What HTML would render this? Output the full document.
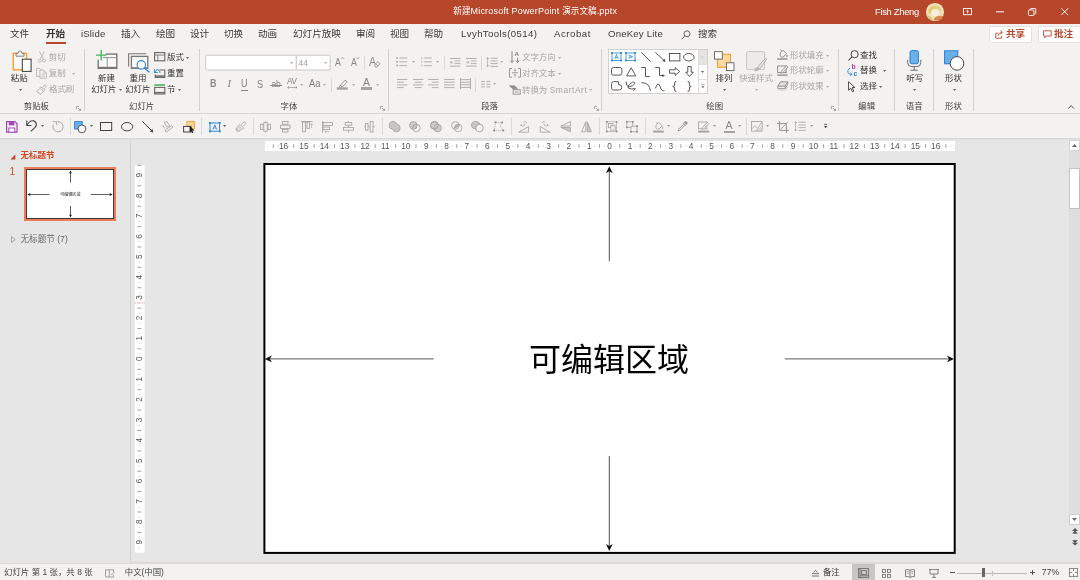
<!DOCTYPE html>
<html lang="zh-CN">
<head>
<meta charset="utf-8">
<title>新建Microsoft PowerPoint 演示文稿.pptx</title>
<style>
*{box-sizing:border-box;margin:0;padding:0}
html,body{width:1080px;height:580px;overflow:hidden;background:#e6e6e6}
body{position:relative;will-change:transform;font-family:"Liberation Sans","Noto Sans CJK SC",sans-serif;font-size:9.6px;color:#444}
.abs,.t{position:absolute;white-space:nowrap}
.t{line-height:12px;height:12px}
svg{position:absolute;overflow:visible}
#titlebar{left:0;top:0;width:1080px;height:24px;background:#b7472a}
#tabs{left:0;top:24px;width:1080px;height:21px;background:#f3f2f1}
#ribbon{left:0;top:45px;width:1080px;height:69px;background:#f3f2f1;border-bottom:1px solid #d8d6d4}
#qat{left:0;top:114px;width:1080px;height:24px;background:#f3f2f1}
#qatline{left:0;top:138px;width:1080px;height:3px;background:linear-gradient(#d4d4d4,#e2e2e2 60%,#e6e6e6)}
#status{left:0;top:563px;width:1080px;height:17px;background:#f3f2f1;border-top:1px solid #dcdad8}
.sep{position:absolute;width:1px;background:#d4d2d0}
.dim{color:#a9a7a5}
.btn{position:absolute;background:#fff;border:1px solid #e4e2e0;border-radius:2px}
</style>
</head>
<body>

<!-- ===== title bar ===== -->
<div id="titlebar" class="abs">
<span class="t" style="left:453.3px;top:4.90px;font-size:8.6px;color:#fff;">新建<span style="font-size:9px;letter-spacing:.2px">Microsoft PowerPoint </span>演示文稿<span style="font-size:9px;letter-spacing:.2px">.pptx</span></span>
<span class="t" style="left:875px;top:5.70px;font-size:9.4px;color:#fff;letter-spacing:-0.3px;">Fish Zheng</span>
<div class="abs" style="left:926.4px;top:3px;width:17.6px;height:17.6px;border-radius:50%;overflow:hidden;background:#efe3bc"><svg style="left:0;top:0" width="17.6" height="17.6" viewBox="0 0 18 18"><path d="M2 9Q3 2.5 9.5 2.6Q15.5 3 15.6 9.5Q13.6 6 10 6.6Q5.5 6 4.4 11.4Q2.4 11 2 9Z" fill="#e6cc78"/><ellipse cx="9.4" cy="10" rx="4" ry="3.8" fill="#f8f0dc"/><path d="M10 14Q14 12.4 17.6 13.4V18H8Q8 15.4 10 14Z" fill="#d98a4a"/><path d="M.4 12Q3.6 12.6 6.4 15.4Q7.4 17 6.4 18H.4Z" fill="#dcc48a"/></svg></div>
<svg style="left:962.8px;top:8.4px" width="9" height="7.4" viewBox="0 0 9 7.4" fill="none" stroke="#fff" stroke-width=".9"><rect x=".5" y=".5" width="8" height="6.2"/><path d="M4.5 5.2V2.4M3.2 3.5 4.5 2.2 5.8 3.5" stroke-width=".8"/></svg>
<svg style="left:996px;top:11px" width="9" height="2" viewBox="0 0 9 2"><path d="M0 .8H8" stroke="#fff" stroke-width="1"/></svg>
<svg style="left:1028.4px;top:7.6px" width="8.6" height="8.6" viewBox="0 0 10 10" fill="none" stroke="#fff" stroke-width="1"><rect x=".5" y="2.3" width="6.4" height="6.4" rx="1"/><path d="M2.6 2.2V1.4Q2.6.6 3.4.6H8.2Q9 .6 9 1.4V6.2Q9 7 8.2 7H7.2"/></svg>
<svg style="left:1061px;top:8.4px" width="7.4" height="7.4" viewBox="0 0 7.4 7.4"><path d="M.3.3 7.1 7.1M7.1 .3.3 7.1" stroke="#fff" stroke-width=".95"/></svg>
</div>
<!-- ===== tab row ===== -->
<div id="tabs" class="abs">
<span class="t" style="left:10px;top:4.10px;font-size:9.6px;color:#3b3b3b;">文件</span>
<span class="t" style="left:46px;top:4.10px;font-size:9.6px;color:#333;font-weight:700;">开始</span>
<span class="t" style="left:81px;top:4.10px;font-size:9.6px;color:#3b3b3b;letter-spacing:0.15px;">iSlide</span>
<span class="t" style="left:121px;top:4.10px;font-size:9.6px;color:#3b3b3b;">插入</span>
<span class="t" style="left:156px;top:4.10px;font-size:9.6px;color:#3b3b3b;">绘图</span>
<span class="t" style="left:190px;top:4.10px;font-size:9.6px;color:#3b3b3b;">设计</span>
<span class="t" style="left:224px;top:4.10px;font-size:9.6px;color:#3b3b3b;">切换</span>
<span class="t" style="left:258px;top:4.10px;font-size:9.6px;color:#3b3b3b;">动画</span>
<span class="t" style="left:293px;top:4.10px;font-size:9.6px;color:#3b3b3b;">幻灯片放映</span>
<span class="t" style="left:356px;top:4.10px;font-size:9.6px;color:#3b3b3b;">审阅</span>
<span class="t" style="left:390px;top:4.10px;font-size:9.6px;color:#3b3b3b;">视图</span>
<span class="t" style="left:424px;top:4.10px;font-size:9.6px;color:#3b3b3b;">帮助</span>
<span class="t" style="left:461px;top:4.10px;font-size:9.6px;color:#3b3b3b;letter-spacing:0.4px;">LvyhTools(0514)</span>
<span class="t" style="left:554px;top:4.10px;font-size:9.6px;color:#3b3b3b;letter-spacing:0.55px;">Acrobat</span>
<span class="t" style="left:608px;top:4.10px;font-size:9.6px;color:#3b3b3b;letter-spacing:0.2px;">OneKey Lite</span>
<div class="abs" style="left:46px;top:18px;width:20px;height:2px;background:#b7472a"></div>
<svg style="left:681px;top:6px" width="10" height="10" viewBox="0 0 10 10" fill="none" stroke="#555" stroke-width=".9"><circle cx="6" cy="3.8" r="3"/><path d="M3.8 6 .8 9.2"/></svg>
<span class="t" style="left:698px;top:4.10px;font-size:9.6px;color:#3b3b3b;">搜索</span>
<div class="btn" style="left:989px;top:2px;width:43px;height:17px"></div>
<svg style="left:995px;top:6px" width="9" height="9" viewBox="0 0 9 9" fill="none" stroke="#b7472a" stroke-width=".9"><path d="M3 3.2H.8V8.2H6.6V6"/><path d="M3 6Q3.4 2.6 7 2.4M5.4.6 7.4 2.4 5.4 4.2"/></svg>
<span class="t" style="left:1006px;top:4.10px;font-size:9.6px;color:#b7472a;font-weight:700;">共享</span>
<div class="btn" style="left:1038px;top:2px;width:46px;height:17px"></div>
<svg style="left:1043px;top:6px" width="9" height="9" viewBox="0 0 9 9" fill="none" stroke="#b7472a" stroke-width=".9"><path d="M.6.8H8.2V6H3.4L1.8 7.8V6H.6Z"/></svg>
<span class="t" style="left:1054px;top:4.10px;font-size:9.6px;color:#b7472a;font-weight:700;">批注</span>
</div>
<!-- ===== ribbon ===== -->
<div id="ribbon" class="abs"></div>
<div class="abs" style="left:0;top:0">
<svg style="left:11.5px;top:50.3px" width="20" height="22.5" viewBox="0 0 20 22.5" fill="none" stroke="#605e5c" stroke-width="0.9" ><rect x="1.3" y="3.4" width="13.2" height="16.4" fill="#fbfaf9" stroke="#f2a33a" stroke-width="1.5"/><path d="M4 6.2V3.4H6Q6.2 .9 8 .9Q9.8 .9 10 3.4H12V6.2Z" stroke="#7a7876" stroke-width=".9" fill="#f3f2f1"/><rect x="10.3" y="9.2" width="8.8" height="12.2" fill="#fff" stroke="#4a4846" stroke-width="1.1"/></svg>
<span class="t" style="left:10.75px;top:72.35px;font-size:8.45px;color:#333;">粘贴</span>
<svg style="left:18.90px;top:88.80px" width="3.2" height="2" viewBox="0 0 3.2 2"><path d="M0 0H3.2L1.6 2Z" fill="#666"/></svg>
<svg style="left:38px;top:51.4px" width="8" height="11.6" viewBox="0 0 8 11.6" fill="none" stroke="#b3b0ad" stroke-width="0.8" ><path d="M1.4.4 5.2 8M6.2.4 2.4 8"/><circle cx="1.7" cy="9.6" r="1.4"/><circle cx="5.9" cy="9.6" r="1.4"/></svg>
<span class="t" style="left:48.75px;top:51.10px;font-size:8.45px;color:#a9a7a5;">剪切</span>
<svg style="left:36.2px;top:67.6px" width="11" height="10.8" viewBox="0 0 11 10.8" fill="none" stroke="#b3b0ad" stroke-width="0.8" ><path d="M3.8 8.4H.5V.5H3.8L5 1.8"/><path d="M3.9 2H7.6L10.4 4.8V10.2H3.9Z"/><path d="M7.4 2.2V5H10.2M5.4 6.4H8.8M5.4 8.2H8.8" stroke-width=".6"/></svg>
<span class="t" style="left:48.75px;top:66.85px;font-size:8.45px;color:#a9a7a5;">复制</span>
<svg style="left:71.60px;top:72.60px" width="3.2" height="2" viewBox="0 0 3.2 2"><path d="M0 0H3.2L1.6 2Z" fill="#b3b0ad"/></svg>
<svg style="left:36.4px;top:84px" width="11" height="11" viewBox="0 0 11 11" fill="none" stroke="#b3b0ad" stroke-width="0.8" ><path d="M6.6 3.6 9 .6 10.6 1.8 8.4 5"/><path d="M4.6 2.8 9 6 8 7.4 3.6 4.2Z"/><path d="M3.6 4.4.6 7.6 2.2 8 2.4 9.2 3.8 9.2 4.2 10.4 7.6 7.2"/></svg>
<span class="t" style="left:49px;top:83.10px;font-size:8.45px;color:#a9a7a5;">格式刷</span>
<span class="t" style="left:23.75px;top:100.35px;font-size:8.45px;color:#444;">剪贴板</span>
<svg style="left:76px;top:106px" width="5" height="5" viewBox="0 0 5 5" fill="none" stroke="#8a8886" stroke-width="0.7" ><path d="M.4 3V.4H3M2 2 4.4 4.4M4.6 2.6V4.6H2.6"/></svg>
<div class="sep" style="left:84px;top:48.5px;height:62.0px;background:#d4d2d0"></div>
<svg style="left:95.5px;top:49.5px" width="22" height="19.5" viewBox="0 0 22 19.5" fill="none" stroke="#605e5c" stroke-width="0.9" ><rect x="2.2" y="4.1" width="18.6" height="14.2" fill="#faf9f8" stroke="#7a7876" stroke-width="1.4"/><path d="M2.2 17.6H20.8" stroke="#7a7876" stroke-width="1.6"/><path d="M11.2 7.6V16.8M2.2 7.6H20.8" stroke="#8a8886" stroke-width=".9"/><rect x="0" y="0" width="9.6" height="6.9" fill="#f3f2f1" stroke="none"/><rect x="0" y="0" width="6.9" height="9.6" fill="#f3f2f1" stroke="none"/><path d="M5.2 0V10.4M0 5.2H10.4" stroke="#3cb55f" stroke-width="1.3"/></svg>
<span class="t" style="left:98px;top:72.35px;font-size:8.45px;color:#333;">新建</span>
<span class="t" style="left:91.2px;top:82.85px;font-size:8.45px;color:#333;">幻灯片</span>
<svg style="left:118.60px;top:88.80px" width="3.2" height="2" viewBox="0 0 3.2 2"><path d="M0 0H3.2L1.6 2Z" fill="#666"/></svg>
<svg style="left:127.5px;top:52.5px" width="22" height="19.5" viewBox="0 0 22 19.5" fill="none" stroke="#605e5c" stroke-width="0.9" ><path d="M.6 13.6V.7H18.2" stroke="#7a7876" stroke-width="1.1"/><rect x="3.4" y="3.4" width="16.4" height="12" fill="#faf9f8" stroke="#7a7876" stroke-width="1.3"/><path d="M3.4 14.8H19.8" stroke="#8a8886" stroke-width="1.4"/><circle cx="13.3" cy="11.8" r="4.2" fill="#fbfbfb" stroke="#2b88d8" stroke-width="1.1"/><path d="M16.3 15 21.4 19.2" stroke="#2b88d8" stroke-width="1.2"/></svg>
<span class="t" style="left:129.5px;top:72.35px;font-size:8.45px;color:#333;">重用</span>
<span class="t" style="left:125.2px;top:82.85px;font-size:8.45px;color:#333;">幻灯片</span>
<svg style="left:154px;top:52px" width="11.5" height="9.5" viewBox="0 0 11.5 9.5" fill="none" stroke="#666" stroke-width="0.9" ><rect x=".6" y=".6" width="10.2" height="8.2" stroke-width="1.1"/><path d="M.6 3H10.8M3.8 3V8.8" stroke-width=".8"/></svg>
<span class="t" style="left:167px;top:50.60px;font-size:8.45px;color:#333;">版式</span>
<svg style="left:186.40px;top:56.60px" width="3.2" height="2" viewBox="0 0 3.2 2"><path d="M0 0H3.2L1.6 2Z" fill="#666"/></svg>
<svg style="left:154px;top:67.5px" width="11.5" height="10" viewBox="0 0 11.5 10" fill="none" stroke="#605e5c" stroke-width="0.9" ><path d="M5.4 2H10.8V9.4H1.2V6.4" stroke="#666" stroke-width="1.1"/><path d="M1.2 8H10.8" stroke="#666" stroke-width="1.4"/><path d="M.4 1.2V4.6H3.8M.8 4.2Q2.6 0 5.4 2.8Q6 3.6 6 5" stroke="#2b88d8" stroke-width="1"/></svg>
<span class="t" style="left:167px;top:66.85px;font-size:8.45px;color:#333;">重置</span>
<svg style="left:154px;top:84px" width="11.5" height="10.5" viewBox="0 0 11.5 10.5" fill="none" stroke="#605e5c" stroke-width="0.9" ><path d="M.4 1H11" stroke="#33a852" stroke-width="1.4"/><rect x=".6" y="3.4" width="10.2" height="6.6" stroke="#666" stroke-width="1.1"/><path d="M.6 8.6H10.8" stroke="#666" stroke-width="1.4"/></svg>
<span class="t" style="left:167px;top:83.10px;font-size:8.45px;color:#333;">节</span>
<svg style="left:178.00px;top:89.00px" width="3.2" height="2" viewBox="0 0 3.2 2"><path d="M0 0H3.2L1.6 2Z" fill="#666"/></svg>
<span class="t" style="left:129px;top:100.35px;font-size:8.45px;color:#444;">幻灯片</span>
<div class="sep" style="left:199px;top:48.5px;height:62.0px;background:#d4d2d0"></div>
<svg style="left:205px;top:54px" width="126" height="17" viewBox="0 0 126 17" fill="none" stroke="#605e5c" stroke-width="1" ><rect x=".7" y="1.2" width="90.6" height="14.8" rx=".8" fill="#fff" stroke="#cbc9c7"/><rect x="91.3" y="1.2" width="33.8" height="14.8" rx=".8" fill="#fff" stroke="#cbc9c7"/></svg>
<svg style="left:290.40px;top:62.00px" width="3.2" height="2" viewBox="0 0 3.2 2"><path d="M0 0H3.2L1.6 2Z" fill="#b3b1af"/></svg>
<span class="t" style="left:298.6px;top:56.60px;font-size:8.45px;color:#a19f9d;">44</span>
<svg style="left:324.20px;top:62.00px" width="3.2" height="2" viewBox="0 0 3.2 2"><path d="M0 0H3.2L1.6 2Z" fill="#b3b1af"/></svg>
<span class="t" style="left:335px;top:56.30px;font-size:10.7px;color:#8a8886;transform:scaleX(.82);transform-origin:0 50%;">A</span>
<svg style="left:340.6px;top:57.1px" width="3.4" height="2.2" viewBox="0 0 3.4 2.2" fill="none" stroke="#8a8886" stroke-width="0.7" ><path d="M.2 2 1.7.3 3.2 2"/></svg>
<span class="t" style="left:350.8px;top:56.30px;font-size:10.7px;color:#8a8886;transform:scaleX(.82);transform-origin:0 50%;">A</span>
<svg style="left:356.3px;top:57.3px" width="3.4" height="2.2" viewBox="0 0 3.4 2.2" fill="none" stroke="#8a8886" stroke-width="0.7" ><path d="M.2 .3 1.7 2 3.2 .3"/></svg>
<div class="sep" style="left:364px;top:55.5px;height:14.0px;background:#dad8d6"></div>
<span class="t" style="left:369px;top:55.50px;font-size:13px;color:#8a8886;transform:scaleX(.82);transform-origin:0 50%;">A</span>
<svg style="left:373.8px;top:60.6px" width="6.6" height="6.8" viewBox="0 0 6.6 6.8" fill="none" stroke="#8a8886" stroke-width="0.8" ><path d="M.6 4 3.8.6 6 2.8 2.8 6.2H1.6Z" fill="#f3f2f1"/><path d="M1.8 2.8 4 5"/></svg>
<span class="t" style="left:210.4px;top:77.70px;font-size:10.3px;color:#8f8d8b;font-weight:700;transform:scaleX(.87);transform-origin:0 50%;">B</span>
<span class="t" style="left:227.4px;top:77.70px;font-size:10.6px;color:#838180;font-style:italic;font-family:'Liberation Serif',serif;">I</span>
<span class="t" style="left:241.3px;top:77.70px;font-size:10.3px;color:#838180;transform:scaleX(.87);transform-origin:0 50%;">U</span>
<div class="abs" style="left:241.2px;top:89.6px;width:6.8px;height:.9px;background:#8a8886"></div>
<span class="t" style="left:257px;top:77.90px;font-size:10.5px;color:#838180;transform:scaleX(.87);transform-origin:0 50%;">S</span>
<span class="t" style="left:271.4px;top:77.80px;font-size:8.6px;color:#838180;letter-spacing:-0.2px;">ab</span>
<div class="abs" style="left:270.4px;top:85px;width:11.8px;height:.8px;background:#8a8886"></div>
<span class="t" style="left:287px;top:76.30px;font-size:8.2px;color:#838180;letter-spacing:-0.3px;">AV</span>
<svg style="left:287.2px;top:85.6px" width="10.6" height="3" viewBox="0 0 10.6 3" fill="none" stroke="#838180" stroke-width="0.6" ><path d="M.6 1.5H10M2 .3.6 1.5 2 2.7M8.6.3 10 1.5 8.6 2.7"/></svg>
<svg style="left:300.20px;top:83.60px" width="3.2" height="2" viewBox="0 0 3.2 2"><path d="M0 0H3.2L1.6 2Z" fill="#b3b1af"/></svg>
<span class="t" style="left:308.8px;top:78.10px;font-size:10.1px;color:#838180;transform:scaleX(.93);transform-origin:0 50%;">Aa</span>
<svg style="left:323.00px;top:83.60px" width="3.2" height="2" viewBox="0 0 3.2 2"><path d="M0 0H3.2L1.6 2Z" fill="#b3b1af"/></svg>
<div class="sep" style="left:331px;top:78px;height:13.5px;background:#dad8d6"></div>
<svg style="left:337px;top:79px" width="11.5" height="10.5" viewBox="0 0 11.5 10.5" fill="none" stroke="#838180" stroke-width="0.8" ><path d="M3.4 6.2 8.2 1 10.2 3 5.2 8"/><path d="M3.4 6.2 5.2 8 3.4 8.6 2.4 8.4 2.6 7.2Z"/><path d="M-.2 9.5H10.8" stroke-width="2.4" stroke="#a6a4a2"/></svg>
<svg style="left:352.20px;top:83.60px" width="3.2" height="2" viewBox="0 0 3.2 2"><path d="M0 0H3.2L1.6 2Z" fill="#b3b1af"/></svg>
<span class="t" style="left:362.6px;top:76.20px;font-size:11px;color:#838180;transform:scaleX(.94);transform-origin:0 50%;">A</span>
<div class="abs" style="left:361px;top:87.3px;width:10.8px;height:2.4px;background:#a6a4a2"></div>
<svg style="left:376.40px;top:83.60px" width="3.2" height="2" viewBox="0 0 3.2 2"><path d="M0 0H3.2L1.6 2Z" fill="#b3b1af"/></svg>
<span class="t" style="left:280.5px;top:100.35px;font-size:8.45px;color:#444;">字体</span>
<svg style="left:380px;top:106px" width="5" height="5" viewBox="0 0 5 5" fill="none" stroke="#8a8886" stroke-width="0.7" ><path d="M.4 3V.4H3M2 2 4.4 4.4M4.6 2.6V4.6H2.6"/></svg>
<div class="sep" style="left:388px;top:48.5px;height:62.0px;background:#d4d2d0"></div>
<svg style="left:396.2px;top:57px" width="11.5" height="9.6" viewBox="0 0 11.5 9.6" fill="none" stroke="#a19f9d" stroke-width="0.8" ><path d="M3.4 1H11.2M3.4 4.8H11.2M3.4 8.6H11.2"/><path d="M.2 1H1.8M.2 4.8H1.8M.2 8.6H1.8" stroke-width="1.5"/></svg>
<svg style="left:412.20px;top:61.00px" width="3.2" height="2" viewBox="0 0 3.2 2"><path d="M0 0H3.2L1.6 2Z" fill="#b3b1af"/></svg>
<svg style="left:421.2px;top:57px" width="11" height="9.6" viewBox="0 0 11 9.6" fill="none" stroke="#a19f9d" stroke-width="0.8" ><path d="M3.2 1H10.8M3.2 4.8H10.8M3.2 8.6H10.8"/><path d="M.8 0V2.2M.8 3.8V6M.8 7.4V9.6" stroke-width=".7"/></svg>
<svg style="left:436.40px;top:61.00px" width="3.2" height="2" viewBox="0 0 3.2 2"><path d="M0 0H3.2L1.6 2Z" fill="#b3b1af"/></svg>
<div class="sep" style="left:444px;top:55.5px;height:14.0px;background:#dad8d6"></div>
<svg style="left:450px;top:57.6px" width="10.5" height="8.6" viewBox="0 0 10.5 8.6" fill="none" stroke="#a19f9d" stroke-width="0.8" ><path d="M0 .5H10.4M4.6 3H10.4M4.6 5.6H10.4M0 8.1H10.4"/><path d="M3.2 4.3H.4M1.6 3 .3 4.3 1.6 5.6" stroke-width=".7"/></svg>
<svg style="left:466.2px;top:57.6px" width="10.8" height="8.6" viewBox="0 0 10.8 8.6" fill="none" stroke="#a19f9d" stroke-width="0.8" ><path d="M0 .5H10.6M4.8 3H10.6M4.8 5.6H10.6M0 8.1H10.6"/><path d="M.2 4.3H3M1.8 3 3.1 4.3 1.8 5.6" stroke-width=".7"/></svg>
<div class="sep" style="left:481px;top:55.5px;height:14.0px;background:#dad8d6"></div>
<svg style="left:486.2px;top:56.6px" width="12" height="10.4" viewBox="0 0 12 10.4" fill="none" stroke="#a19f9d" stroke-width="0.8" ><path d="M4.6 1.2H11.8M4.6 4H11.8M4.6 6.6H11.8M4.6 9.4H11.8"/><path d="M1.6 .6V9.8M.3 2 1.6.5 2.9 2M.3 8.4 1.6 9.9 2.9 8.4" stroke-width=".7"/></svg>
<svg style="left:500.20px;top:61.00px" width="3.2" height="2" viewBox="0 0 3.2 2"><path d="M0 0H3.2L1.6 2Z" fill="#b3b1af"/></svg>
<svg style="left:397px;top:79.2px" width="10.6" height="9.2" viewBox="0 0 10.6 9.2" fill="none" stroke="#a19f9d" stroke-width="0.8" ><path d="M0 .5H10.4M0 3.2H6.8M0 5.9H10.4M0 8.6H6.8"/></svg>
<svg style="left:412.5px;top:79.2px" width="10.6" height="9.2" viewBox="0 0 10.6 9.2" fill="none" stroke="#a19f9d" stroke-width="0.8" ><path d="M0 .5H10.4M1.8 3.2H8.6M0 5.9H10.4M1.8 8.6H8.6"/></svg>
<svg style="left:428px;top:79.2px" width="10.8" height="9.2" viewBox="0 0 10.8 9.2" fill="none" stroke="#a19f9d" stroke-width="0.8" ><path d="M0 .5H10.6M3.8 3.2H10.6M0 5.9H10.6M3.8 8.6H10.6"/></svg>
<svg style="left:443.8px;top:79.2px" width="10.8" height="9.2" viewBox="0 0 10.8 9.2" fill="none" stroke="#a19f9d" stroke-width="0.8" ><path d="M0 .5H10.6M0 3.2H10.6M0 5.9H10.6M0 8.6H10.6"/></svg>
<svg style="left:459.5px;top:78.4px" width="11" height="11" viewBox="0 0 11 11" fill="none" stroke="#a19f9d" stroke-width="0.8" ><path d="M.5 0V11M10.5 0V11" stroke-width=".8"/><path d="M.5 1.6H10.5M.5 4.2H10.5M.5 6.8H10.5M.5 9.4H10.5"/></svg>
<div class="sep" style="left:475px;top:78px;height:13.5px;background:#dad8d6"></div>
<svg style="left:480.8px;top:80.6px" width="9.4" height="6.6" viewBox="0 0 9.4 6.6" fill="none" stroke="#a19f9d" stroke-width="0.8" ><path d="M0 .5H4M5.4 .5H9.4M0 3.2H4M5.4 3.2H9.4M0 5.9H4M5.4 5.9H9.4"/></svg>
<svg style="left:493.40px;top:83.40px" width="3.2" height="2" viewBox="0 0 3.2 2"><path d="M0 0H3.2L1.6 2Z" fill="#b3b1af"/></svg>
<svg style="left:509.6px;top:51px" width="10" height="12.6" viewBox="0 0 10 12.6" fill="none" stroke="#807e7c" stroke-width="0.9" ><path d="M2 .4V11.4M.3 9.6 2 11.6 3.7 9.6" stroke-width=".9"/><path d="M7.6 6.6V11.4M6.1 9.6 7.6 11.6 9.1 9.6" stroke-width=".9"/></svg>
<span class="t" style="left:514.4px;top:48.20px;font-size:6.2px;color:#807e7c;font-weight:700;">A</span>
<span class="t" style="left:522px;top:51.10px;font-size:8.45px;color:#a9a7a5;">文字方向</span>
<svg style="left:557.60px;top:57.00px" width="3.2" height="2" viewBox="0 0 3.2 2"><path d="M0 0H3.2L1.6 2Z" fill="#b3b1af"/></svg>
<svg style="left:508.6px;top:68.2px" width="12" height="9.6" viewBox="0 0 12 9.6" fill="none" stroke="#8f8d8b" stroke-width="0.8" ><path d="M3 .5H.5V9.1H3M9 .5H11.5V9.1H9" stroke-width=".9"/><path d="M6 .2V3.2M4.8 2.2 6 3.4 7.2 2.2M6 9.4V6.4M4.8 7.4 6 6.2 7.2 7.4" stroke-width=".7"/><path d="M3 4.8H9" stroke-width=".9"/></svg>
<span class="t" style="left:522px;top:66.60px;font-size:8.45px;color:#a9a7a5;">对齐文本</span>
<svg style="left:557.60px;top:72.60px" width="3.2" height="2" viewBox="0 0 3.2 2"><path d="M0 0H3.2L1.6 2Z" fill="#b3b1af"/></svg>
<svg style="left:509px;top:84.6px" width="11.8" height="9.8" viewBox="0 0 11.8 9.8" fill="none" stroke="#a19f9d" stroke-width="0.8" ><path d="M.4 .8H5.4L8.4 3.4H5.6V5.2L.4 .8Z" fill="#908e8c" stroke="#908e8c" stroke-width=".7"/><rect x="4.2" y="4.6" width="7" height="4.6" fill="#f3f2f1" stroke="#908e8c" stroke-width=".9"/><path d="M5.6 6.2H9.8M5.6 7.6H9.8" stroke-width=".6"/></svg>
<span class="t" style="left:522px;top:83.60px;font-size:8.45px;color:#a9a7a5;">转换为 <span style="letter-spacing:.55px">SmartArt</span></span>
<svg style="left:589.20px;top:89.40px" width="3.2" height="2" viewBox="0 0 3.2 2"><path d="M0 0H3.2L1.6 2Z" fill="#b3b1af"/></svg>
<span class="t" style="left:481.2px;top:100.35px;font-size:8.45px;color:#444;">段落</span>
<svg style="left:594px;top:106px" width="5" height="5" viewBox="0 0 5 5" fill="none" stroke="#8a8886" stroke-width="0.7" ><path d="M.4 3V.4H3M2 2 4.4 4.4M4.6 2.6V4.6H2.6"/></svg>
<div class="sep" style="left:601px;top:48.5px;height:62.0px;background:#d4d2d0"></div>
<div class="abs" style="left:608.4px;top:49.3px;width:99.4px;height:44.6px;background:#fff;border:1px solid #d2d0ce"></div>
<div class="abs" style="left:698px;top:50.2px;width:9px;height:14.2px;background:#e6e4e2"></div>
<div class="abs" style="left:698px;top:50px;width:1px;height:43px;background:#e1dfdd"></div>
<div class="abs" style="left:698px;top:64.4px;width:9px;height:1px;background:#e1dfdd"></div>
<div class="abs" style="left:698px;top:78.6px;width:9px;height:1px;background:#e1dfdd"></div>
<svg style="left:701.4px;top:56.4px" width="2.6" height="1.6" viewBox="0 0 2.6 1.6" fill="none" stroke="#605e5c" stroke-width="0.9" ><path d="M0 1.6H2.6L1.3 0Z" fill="#c8c6c4" stroke="none"/></svg>
<svg style="left:701.2px;top:71px" width="3" height="2" viewBox="0 0 3 2" fill="none" stroke="#605e5c" stroke-width="0.9" ><path d="M0 0H3L1.5 2Z" fill="#605e5c" stroke="none"/></svg>
<svg style="left:700.8px;top:83.6px" width="3.8" height="4.6" viewBox="0 0 3.8 4.6" fill="none" stroke="#605e5c" stroke-width="0.9" ><path d="M0 .4H3.8" stroke="#8a8886" stroke-width=".7"/><path d="M.2 2H3.6L1.9 4.4Z" fill="#8a8886" stroke="none"/></svg>
<svg style="left:610.75px;top:52.3px" width="11" height="9.4" viewBox="0 0 11 9.4" fill="none" stroke="#484644" stroke-width="0.9" ><rect x="1" y="1" width="9" height="7.4" fill="#fff" stroke="#1f7fd6" stroke-width=".8"/><rect x="0" y="0" width="1.8" height="1.8" fill="#2b88d8" stroke="none"/><rect x="9.2" y="0" width="1.8" height="1.8" fill="#2b88d8" stroke="none"/><rect x="0" y="7.6" width="1.8" height="1.8" fill="#2b88d8" stroke="none"/><rect x="9.2" y="7.6" width="1.8" height="1.8" fill="#2b88d8" stroke="none"/><path d="M3.7 7 5.5 2.4 7.3 7M4.3 5.5H6.7" stroke="#2b88d8" stroke-width=".8"/></svg>
<svg style="left:625.3px;top:52.3px" width="11" height="9.4" viewBox="0 0 11 9.4" fill="none" stroke="#484644" stroke-width="0.9" ><rect x="1" y="1" width="9" height="7.4" fill="#fff" stroke="#1f7fd6" stroke-width=".8"/><rect x="0" y="0" width="1.8" height="1.8" fill="#2b88d8" stroke="none"/><rect x="9.2" y="0" width="1.8" height="1.8" fill="#2b88d8" stroke="none"/><rect x="0" y="7.6" width="1.8" height="1.8" fill="#2b88d8" stroke="none"/><rect x="9.2" y="7.6" width="1.8" height="1.8" fill="#2b88d8" stroke="none"/><path d="M3.6 3 7.6 4.7 3.6 6.4M4.8 3.6V5.8" stroke="#2b88d8" stroke-width=".8"/></svg>
<svg style="left:640.5px;top:52.0px" width="10" height="10" viewBox="0 0 10 10" fill="none" stroke="#484644" stroke-width="0.9" ><path d="M.4 .4 9.6 9.6"/></svg>
<svg style="left:654.5px;top:52.0px" width="11" height="10" viewBox="0 0 11 10" fill="none" stroke="#484644" stroke-width="0.9" ><path d="M.4 .4 10 9.4"/><path d="M10.6 10 7.4 9 9.4 6.8Z" fill="#444" stroke="none"/></svg>
<svg style="left:668.9px;top:52.8px" width="11.4" height="8.4" viewBox="0 0 11.4 8.4" fill="none" stroke="#484644" stroke-width="0.9" ><rect x=".5" y=".5" width="10.4" height="7.4"/></svg>
<svg style="left:683.4px;top:52.8px" width="11.6" height="8.4" viewBox="0 0 11.6 8.4" fill="none" stroke="#484644" stroke-width="0.9" ><ellipse cx="5.8" cy="4.2" rx="5.3" ry="3.7"/></svg>
<svg style="left:610.55px;top:67.45px" width="11.4" height="8.6" viewBox="0 0 11.4 8.6" fill="none" stroke="#484644" stroke-width="0.9" ><rect x=".5" y=".5" width="10.4" height="7.6" rx="2"/></svg>
<svg style="left:625.6px;top:67.05px" width="10.4" height="9.4" viewBox="0 0 10.4 9.4" fill="none" stroke="#484644" stroke-width="0.9" ><path d="M5.2 .8 9.8 8.9H.6Z"/></svg>
<svg style="left:641.0px;top:66.75px" width="9" height="10" viewBox="0 0 9 10" fill="none" stroke="#484644" stroke-width="0.9" ><path d="M.2 .5H4.5V9.5H8.8"/></svg>
<svg style="left:655.0px;top:66.75px" width="10" height="10" viewBox="0 0 10 10" fill="none" stroke="#484644" stroke-width="0.9" ><path d="M.2 .5H4.5V8.6H8.4"/><path d="M10 8.6 7.4 7.2V10Z" fill="#444" stroke="none"/></svg>
<svg style="left:668.9px;top:67.25px" width="11.4" height="9" viewBox="0 0 11.4 9" fill="none" stroke="#484644" stroke-width="0.9" ><path d="M.5 2.8H6.2V.7L10.8 4.5 6.2 8.3V6.2H.5Z"/></svg>
<svg style="left:684.7px;top:66.25px" width="9" height="11" viewBox="0 0 9 11" fill="none" stroke="#484644" stroke-width="0.9" ><path d="M2.8 .5H6.2V6.2H8.3L4.5 10.5.7 6.2H2.8Z"/></svg>
<svg style="left:610.55px;top:81.45px" width="11.4" height="9.6" viewBox="0 0 11.4 9.6" fill="none" stroke="#484644" stroke-width="0.9" ><path d="M2.6 .6H7.4V3.4Q10.6 3.4 10.8 6.4Q10.8 9 8.4 9H2.4Q.6 9 .6 7.2V2.6Q.6 .6 2.6 .6Z"/></svg>
<svg style="left:625.1px;top:81.05px" width="11.4" height="10.4" viewBox="0 0 11.4 10.4" fill="none" stroke="#484644" stroke-width="0.9" ><path d="M1.2 .6Q1.4 5.4 3.6 5.8Q8.2 5.4 10 2.4Q9.4 -.2 6 2Q2 4.8 3.2 7Q5.2 8.8 10.4 7.6L8.4 10"/></svg>
<svg style="left:640.5px;top:81.55px" width="10" height="9.4" viewBox="0 0 10 9.4" fill="none" stroke="#484644" stroke-width="0.9" ><path d="M.4 .6Q8.6 .6 9.4 9"/></svg>
<svg style="left:655.0px;top:81.75px" width="10" height="9" viewBox="0 0 10 9" fill="none" stroke="#484644" stroke-width="0.9" ><path d="M.4 6.4Q3 -1.4 5 4.4Q7 10.4 9.6 8.4"/></svg>
<svg style="left:672.1px;top:80.75px" width="5" height="11" viewBox="0 0 5 11" fill="none" stroke="#484644" stroke-width="0.9" ><path d="M4.4 .5Q2.6 .5 2.6 2V4Q2.6 5.5 .8 5.5Q2.6 5.5 2.6 7V9Q2.6 10.5 4.4 10.5"/></svg>
<svg style="left:686.7px;top:80.75px" width="5" height="11" viewBox="0 0 5 11" fill="none" stroke="#484644" stroke-width="0.9" ><path d="M.6 .5Q2.4 .5 2.4 2V4Q2.4 5.5 4.2 5.5Q2.4 5.5 2.4 7V9Q2.4 10.5 .6 10.5"/></svg>
<svg style="left:713.8px;top:51px" width="20.8" height="20.6" viewBox="0 0 20.8 20.6" fill="none" stroke="#605e5c" stroke-width="0.9" ><rect x="3.5" y="3.3" width="13" height="13" fill="#fbd9a0" stroke="#f0a030" stroke-width="1.1"/><rect x=".5" y=".7" width="7.8" height="7.4" fill="#fff" stroke="#605e5c" stroke-width=".9"/><rect x="12.4" y="11.8" width="7.6" height="7.8" fill="#fff" stroke="#605e5c" stroke-width=".9"/></svg>
<span class="t" style="left:715.5px;top:72.35px;font-size:8.45px;color:#333;">排列</span>
<svg style="left:723.40px;top:89.00px" width="3.2" height="2" viewBox="0 0 3.2 2"><path d="M0 0H3.2L1.6 2Z" fill="#666"/></svg>
<svg style="left:745.5px;top:51px" width="21" height="20.6" viewBox="0 0 21 20.6" fill="none" stroke="#605e5c" stroke-width="0.9" ><rect x=".6" y=".6" width="18" height="18" rx="1.6" fill="#ecebe9" stroke="#c8c6c4" stroke-width="1"/><path d="M20 7.2Q14.4 11.8 11.6 16.6L13.6 18Q17.4 13.4 20.6 8Z" fill="#e6e4e2" stroke="#aeacaa" stroke-width=".9"/><path d="M11.4 16.6Q9 16.6 8.6 20Q11.6 20.2 13.4 18Z" fill="#bebcba" stroke="#aeacaa" stroke-width=".6"/></svg>
<span class="t" style="left:739.2px;top:72.35px;font-size:8.45px;color:#a9a7a5;">快速样式</span>
<svg style="left:755.20px;top:89.00px" width="3.2" height="2" viewBox="0 0 3.2 2"><path d="M0 0H3.2L1.6 2Z" fill="#b3b0ad"/></svg>
<svg style="left:777px;top:49.4px" width="11.4" height="11" viewBox="0 0 11.4 11" fill="none" stroke="#918f8d" stroke-width="0.9" ><path d="M3.2 4 6 1.2 9.6 4.8 6 8.2 4.4 8.2 3.2 6.8Z" stroke-width="1"/><path d="M4.8 2.6 3.6 .4" stroke-width=".9"/><path d="M10 5.8Q11.2 7.4 10 8Q8.8 7.4 10 5.8Z" fill="#918f8d" stroke-width=".5"/><path d="M.2 10H10.6" stroke="#a6a4a2" stroke-width="1.8"/></svg>
<span class="t" style="left:790px;top:49.35px;font-size:8.45px;color:#a9a7a5;">形状填充</span>
<svg style="left:825.90px;top:55.20px" width="3.2" height="2" viewBox="0 0 3.2 2"><path d="M0 0H3.2L1.6 2Z" fill="#b3b0ad"/></svg>
<svg style="left:777px;top:64.6px" width="11.4" height="11" viewBox="0 0 11.4 11" fill="none" stroke="#918f8d" stroke-width="0.9" ><rect x=".6" y="1" width="8.6" height="6.6" stroke-width="1"/><path d="M4.4 6.2 9.6 .8 11 2.2 5.8 7.6 3.8 8.2Z" fill="#f3f2f1" stroke-width=".9"/><path d="M.2 10.2H10.6" stroke="#a6a4a2" stroke-width="1.8"/></svg>
<span class="t" style="left:790px;top:64.35px;font-size:8.45px;color:#a9a7a5;">形状轮廓</span>
<svg style="left:825.90px;top:70.20px" width="3.2" height="2" viewBox="0 0 3.2 2"><path d="M0 0H3.2L1.6 2Z" fill="#b3b0ad"/></svg>
<svg style="left:777px;top:81.2px" width="11.6" height="10" viewBox="0 0 11.6 10" fill="none" stroke="#918f8d" stroke-width="0.9" ><path d="M3.6 .8H10.8L8.2 5.2H.8Z" fill="#e4e2e0" stroke-width="1"/><path d="M.8 5.2V7.6H8.2L10.8 3.2V.8M8.2 5.2V7.6" stroke-width=".9"/><path d="M1.2 9.2H8.8L11 5.6" stroke-width=".7" stroke="#c2c0be"/></svg>
<span class="t" style="left:790px;top:79.85px;font-size:8.45px;color:#a9a7a5;">形状效果</span>
<svg style="left:825.90px;top:85.80px" width="3.2" height="2" viewBox="0 0 3.2 2"><path d="M0 0H3.2L1.6 2Z" fill="#b3b0ad"/></svg>
<span class="t" style="left:706.25px;top:100.35px;font-size:8.45px;color:#444;">绘图</span>
<svg style="left:830.8px;top:106px" width="5" height="5" viewBox="0 0 5 5" fill="none" stroke="#8a8886" stroke-width="0.7" ><path d="M.4 3V.4H3M2 2 4.4 4.4M4.6 2.6V4.6H2.6"/></svg>
<div class="sep" style="left:838px;top:48.5px;height:62.0px;background:#d4d2d0"></div>
<svg style="left:847.5px;top:49.6px" width="11" height="11" viewBox="0 0 11 11" fill="none" stroke="#444" stroke-width="0.9" ><circle cx="6.6" cy="4.2" r="3.6" stroke-width="1"/><path d="M4 6.8 .5 10.4" stroke-width="1.1"/></svg>
<span class="t" style="left:860px;top:48.80px;font-size:8.45px;color:#333;">查找</span>
<svg style="left:847px;top:64.6px" width="11" height="12" viewBox="0 0 11 12" fill="none" stroke="#605e5c" stroke-width="0.9" ><path d="M3 3Q.2 4.4 .8 7.2Q1.6 9.8 4.8 9.4M3.4 7.6 5 9.4 3.2 10.8" stroke="#2b88d8" stroke-width=".9"/><path d="M3 4.8 1 6.8-.2 5" stroke="#2b88d8" stroke-width=".8" fill="none" opacity="0"/></svg>
<span class="t" style="left:851.4px;top:60.80px;font-size:6.8px;color:#c239b3;font-weight:700;">b</span>
<span class="t" style="left:853.4px;top:67.80px;font-size:6.8px;color:#2b88d8;font-weight:700;">c</span>
<span class="t" style="left:860px;top:64.35px;font-size:8.45px;color:#333;">替换</span>
<svg style="left:883.00px;top:70.20px" width="3.2" height="2" viewBox="0 0 3.2 2"><path d="M0 0H3.2L1.6 2Z" fill="#666"/></svg>
<svg style="left:848px;top:80.6px" width="8.6" height="11.2" viewBox="0 0 8.6 11.2" fill="none" stroke="#605e5c" stroke-width="0.9" ><path d="M.6 .8V9.2L2.8 7.2 4.4 10.8 5.8 10.2 4.2 6.6H7Z" fill="#fff" stroke="#333" stroke-width=".9"/></svg>
<span class="t" style="left:860px;top:79.85px;font-size:8.45px;color:#333;">选择</span>
<svg style="left:879.20px;top:85.80px" width="3.2" height="2" viewBox="0 0 3.2 2"><path d="M0 0H3.2L1.6 2Z" fill="#666"/></svg>
<span class="t" style="left:858.25px;top:100.35px;font-size:8.45px;color:#444;">编辑</span>
<div class="sep" style="left:894px;top:48.5px;height:62.0px;background:#d4d2d0"></div>
<svg style="left:907px;top:50.4px" width="14.4" height="20.8" viewBox="0 0 14.4 20.8" fill="none" stroke="#605e5c" stroke-width="0.9" ><rect x="3" y=".6" width="8.4" height="13.2" rx="1.8" fill="#6cb0ea" stroke="#2b7cd3" stroke-width="1"/><path d="M.6 9.8V12.6Q.6 16.6 4.6 16.6H9.8Q13.8 16.6 13.8 12.6V9.8M7.2 16.6V20M3.6 20.2H10.8" stroke="#605e5c" stroke-width=".9"/></svg>
<span class="t" style="left:906.25px;top:72.35px;font-size:8.45px;color:#333;">听写</span>
<svg style="left:913.00px;top:89.00px" width="3.2" height="2" viewBox="0 0 3.2 2"><path d="M0 0H3.2L1.6 2Z" fill="#666"/></svg>
<span class="t" style="left:905.75px;top:100.35px;font-size:8.45px;color:#444;">语音</span>
<div class="sep" style="left:933px;top:48.5px;height:62.0px;background:#d4d2d0"></div>
<svg style="left:943.6px;top:50.4px" width="20.6" height="21" viewBox="0 0 20.6 21" fill="none" stroke="#605e5c" stroke-width="0.9" ><rect x=".6" y=".8" width="13.2" height="13" fill="#6cb0ea" stroke="#2b7cd3" stroke-width="1"/><circle cx="13" cy="13.4" r="6.8" fill="#fff" stroke="#444" stroke-width="1"/></svg>
<span class="t" style="left:945px;top:72.35px;font-size:8.45px;color:#333;">形状</span>
<svg style="left:953.00px;top:89.00px" width="3.2" height="2" viewBox="0 0 3.2 2"><path d="M0 0H3.2L1.6 2Z" fill="#666"/></svg>
<span class="t" style="left:945px;top:100.35px;font-size:8.45px;color:#444;">形状</span>
<div class="sep" style="left:973px;top:48.5px;height:62.0px;background:#d4d2d0"></div>
<svg style="left:1068.2px;top:105px" width="6.4" height="4" viewBox="0 0 6.4 4" fill="none" stroke="#444" stroke-width="0.9" ><path d="M.4 3.6 3.2 .6 6 3.6"/></svg>
</div>
<!-- ===== quick access toolbar ===== -->
<div id="qat" class="abs"></div><div id="qatline" class="abs"></div>
<div class="abs" style="left:0;top:0">
<svg style="left:5.5px;top:120.8px" width="11.6" height="11.8" viewBox="0 0 11.6 11.8" fill="none" stroke="#605e5c" stroke-width="0.9" ><path d="M.6 .6H9L11 2.6V11.2H.6Z" stroke="#a347ba" stroke-width="1.2"/><rect x="2.8" y=".8" width="5.6" height="3.6" fill="#a347ba" stroke="none"/><rect x="2.8" y="7" width="6" height="4.2" fill="#fff" stroke="#a347ba" stroke-width="1"/></svg>
<svg style="left:26.2px;top:120.4px" width="11.6" height="12" viewBox="0 0 11.6 12" fill="none" stroke="#444" stroke-width="0.9" ><path d="M.8 .6V5.5H5.4" stroke-width="1.1"/><path d="M1 5.2Q3.6 .4 7.2 .8Q10.4 1.6 10.4 4.6Q10.2 6.4 8.6 7.8L4.8 11.4" stroke-width="1.1"/></svg>
<svg style="left:41.00px;top:124.70px" width="3.2" height="2" viewBox="0 0 3.2 2"><path d="M0 0H3.2L1.6 2Z" fill="#666"/></svg>
<svg style="left:51.6px;top:120.8px" width="11.6" height="11.6" viewBox="0 0 11.6 11.6" fill="none" stroke="#a19f9d" stroke-width="0.9" ><path d="M.6 .6H4.7V4.4" stroke-width=".8"/><path d="M1.4 3.6A5.1 5.1 0 1 0 5.4 .7" stroke-width=".9"/></svg>
<div class="sep" style="left:70px;top:117.5px;height:17.5px;background:#dad8d6"></div>
<svg style="left:73.6px;top:120.6px" width="12.8" height="12.6" viewBox="0 0 12.8 12.6" fill="none" stroke="#605e5c" stroke-width="0.9" ><rect x=".6" y=".6" width="7.6" height="7.4" fill="#6cb0ea" stroke="#2b7cd3" stroke-width=".9"/><circle cx="7.9" cy="7.9" r="3.9" fill="#fcfcfc" stroke="#444" stroke-width=".9"/></svg>
<svg style="left:89.60px;top:124.70px" width="3.2" height="2" viewBox="0 0 3.2 2"><path d="M0 0H3.2L1.6 2Z" fill="#666"/></svg>
<svg style="left:100px;top:122.4px" width="12.2" height="9" viewBox="0 0 12.2 9" fill="none" stroke="#444" stroke-width="0.9" ><rect x=".5" y=".5" width="11.2" height="8" stroke-width="1"/></svg>
<svg style="left:120.6px;top:122.2px" width="12.2" height="9.4" viewBox="0 0 12.2 9.4" fill="none" stroke="#444" stroke-width="0.9" ><ellipse cx="6.1" cy="4.7" rx="5.6" ry="4.2" stroke-width="1"/></svg>
<svg style="left:141.6px;top:121px" width="11.6" height="11.6" viewBox="0 0 11.6 11.6" fill="none" stroke="#444" stroke-width="0.9" ><path d="M.4 .4 10.4 10.4" stroke-width="1"/><path d="M11.4 11.4 7.8 10.4 10.4 7.8Z" fill="#444" stroke="none"/></svg>
<svg style="left:162.4px;top:120.8px" width="11.6" height="12" viewBox="0 0 11.6 12" fill="none" stroke="#a19f9d" stroke-width="0.8" ><path d="M2.2 1.6 4.8 .4 7.6 4.8 5 6.2Z"/><path d="M3.6 8.8 9.6 4.6 10.8 6.2 5 10.6 3.4 10.8Z"/><path d="M.8 4.2 2.4 7.4"/></svg>
<svg style="left:183.2px;top:120.6px" width="12" height="12.4" viewBox="0 0 12 12.4" fill="none" stroke="#605e5c" stroke-width="0.9" ><rect x="4" y=".6" width="7.4" height="7.4" fill="#fbd69a" stroke="#f0a030" stroke-width="1"/><rect x=".6" y="5.4" width="7.4" height="5.6" fill="#f3f2f1" stroke="#444" stroke-width="1"/><path d="M6.8 5V11L8.2 9.8 9.2 12 10.2 11.6 9.2 9.4H11Z" fill="#222" stroke="#222" stroke-width=".4"/></svg>
<div class="sep" style="left:201px;top:117.5px;height:17.5px;background:#dad8d6"></div>
<svg style="left:208.6px;top:121.6px" width="11.8" height="10.4" viewBox="0 0 11.8 10.4" fill="none" stroke="#605e5c" stroke-width="0.9" ><rect x="1" y="1" width="9.6" height="8.2" stroke="#2b88d8" stroke-width="1"/><rect x="0" y="0" width="1.9" height="1.9" fill="#2b88d8" stroke="none"/><rect x="9.8" y="0" width="1.9" height="1.9" fill="#2b88d8" stroke="none"/><rect x="0" y="8.4" width="1.9" height="1.9" fill="#2b88d8" stroke="none"/><rect x="9.8" y="8.4" width="1.9" height="1.9" fill="#2b88d8" stroke="none"/><path d="M3.9 7.6 5.8 2.8 7.7 7.6M4.6 6H7" stroke="#2b88d8" stroke-width=".85"/></svg>
<svg style="left:223.40px;top:124.60px" width="3.2" height="2" viewBox="0 0 3.2 2"><path d="M0 0H3.2L1.6 2Z" fill="#666"/></svg>
<svg style="left:235px;top:120.6px" width="11.6" height="11.6" viewBox="0 0 11.6 11.6" fill="none" stroke="#a19f9d" stroke-width="0.8" ><path d="M6.6 3.4 9.2.6 11 2.4 8.4 5.2"/><path d="M4.8 3.2 8.8 7.2 7.6 8.4 3.6 4.4Z"/><path d="M3.8 4.8.6 8 2 8.6 1.6 10 3 9.6 3.4 11 6.6 7.8" fill="#dddbd9"/></svg>
<div class="sep" style="left:253px;top:117.5px;height:17.5px;background:#dad8d6"></div>
<svg style="left:259.5px;top:121px" width="11" height="11.6" viewBox="0 0 11 11.6" fill="none" stroke="#a19f9d" stroke-width="0.8" ><path d="M5.5 0V11.6" stroke-width=".7"/><rect x=".5" y="3.2" width="2.6" height="5.4"/><rect x="3.8" y="1.4" width="3.4" height="8.8" fill="#f3f2f1"/><rect x="8" y="3.2" width="2.6" height="5.4"/></svg>
<svg style="left:280.4px;top:121px" width="10.6" height="11.6" viewBox="0 0 10.6 11.6" fill="none" stroke="#a19f9d" stroke-width="0.8" ><path d="M0 5.8H10.6" stroke-width=".7"/><rect x="2.6" y=".6" width="5.4" height="2.6"/><rect x=".6" y="4.2" width="9.4" height="3.2" fill="#f3f2f1"/><rect x="2.6" y="8.4" width="5.4" height="2.6"/></svg>
<svg style="left:300.8px;top:121px" width="11.8" height="11.6" viewBox="0 0 11.8 11.6" fill="none" stroke="#a19f9d" stroke-width="0.8" ><path d="M0 .6H11.6" stroke-width=".9"/><rect x="1.6" y="1" width="2.8" height="9.8"/><rect x="6" y="1" width="2.6" height="6.6"/><path d="M10.6 3V7M9.6 4 10.6 2.8 11.6 4" stroke-width=".6"/></svg>
<svg style="left:322px;top:121px" width="11.2" height="11.6" viewBox="0 0 11.2 11.6" fill="none" stroke="#a19f9d" stroke-width="0.8" ><path d="M.6 0V11.6" stroke-width=".9"/><rect x="1" y="1.6" width="9.6" height="2.8"/><rect x="1" y="6" width="6.4" height="2.6"/><path d="M3 10.6H7M4 9.6 2.8 10.6 4 11.6" stroke-width=".6"/></svg>
<svg style="left:343px;top:121px" width="11" height="11.6" viewBox="0 0 11 11.6" fill="none" stroke="#a19f9d" stroke-width="0.8" ><path d="M5.5 0V11.6" stroke-width=".7"/><rect x="2.2" y="1.6" width="6.6" height="2.6" fill="#f3f2f1"/><rect x=".5" y="6.4" width="10" height="2.8" fill="#f3f2f1"/></svg>
<svg style="left:363.8px;top:121px" width="11" height="11.6" viewBox="0 0 11 11.6" fill="none" stroke="#a19f9d" stroke-width="0.8" ><path d="M0 5.8H11" stroke-width=".7"/><rect x="1.4" y="2.4" width="2.6" height="6.8" fill="#f3f2f1"/><rect x="6.2" y=".6" width="2.8" height="10.4" fill="#f3f2f1"/></svg>
<div class="sep" style="left:382px;top:117.5px;height:17.5px;background:#dad8d6"></div>
<svg style="left:388.6px;top:121.2px" width="11.6" height="11.4" viewBox="0 0 11.6 11.4" fill="none" stroke="#a19f9d" stroke-width="0.8" ><path d="M4.4 .6A3.8 3.8 0 0 1 8 3.2A3.9 3.9 0 1 1 3.6 8.2A3.8 3.8 0 0 1 4.4 .6Z" fill="#c8c6c4"/></svg>
<svg style="left:409.4px;top:121.2px" width="12" height="11.4" viewBox="0 0 12 11.4" fill="none" stroke="#a19f9d" stroke-width="0.8" ><circle cx="4.4" cy="4.4" r="3.8" fill="#d0cecc"/><circle cx="7.4" cy="7" r="3.8" fill="none"/><path d="M4 6.4A3.8 3.8 0 0 1 7.8 3.4A3.8 3.8 0 0 1 4 6.4Z" fill="#f3f2f1"/></svg>
<svg style="left:430.4px;top:121.2px" width="12.2" height="11.4" viewBox="0 0 12.2 11.4" fill="none" stroke="#a19f9d" stroke-width="0.8" ><circle cx="4.4" cy="4.4" r="3.8" fill="#d0cecc"/><circle cx="7.6" cy="7" r="3.8" fill="#d0cecc"/><circle cx="4.4" cy="4.4" r="3.8"/><path d="M3.6 7.4Q6.4 8.6 8 4.6" stroke-width=".7"/></svg>
<svg style="left:451.2px;top:121.2px" width="11.6" height="11.4" viewBox="0 0 11.6 11.4" fill="none" stroke="#a19f9d" stroke-width="0.8" ><circle cx="4.4" cy="4.4" r="3.8"/><circle cx="7.2" cy="7" r="3.8"/><path d="M3.8 6.6A3.8 3.8 0 0 1 7.8 3.4A3.8 3.8 0 0 1 3.8 6.6Z" fill="#c8c6c4"/></svg>
<svg style="left:472px;top:121.2px" width="12" height="11.4" viewBox="0 0 12 11.4" fill="none" stroke="#a19f9d" stroke-width="0.8" ><circle cx="7.4" cy="7" r="3.9" fill="#f3f2f1"/><path d="M4.4 .6A3.8 3.8 0 1 0 3.8 8A4 4 0 0 1 8 3.2A3.8 3.8 0 0 0 4.4 .6Z" fill="#c8c6c4"/></svg>
<svg style="left:493px;top:121.4px" width="11.6" height="10.8" viewBox="0 0 11.6 10.8" fill="none" stroke="#a19f9d" stroke-width="0.8" ><path d="M2.6 1.4 9 1.6 7.2 5 10.2 9.4 1.2 9.4Z" stroke-dasharray="1.2 .8" stroke-width=".7"/><rect x="1.6" y=".4" width="1.8" height="1.8" fill="#8a8886" stroke="none"/><rect x="8.2" y=".6" width="1.8" height="1.8" fill="#8a8886" stroke="none"/><rect x=".2" y="8.6" width="1.8" height="1.8" fill="#8a8886" stroke="none"/><rect x="9.4" y="8.6" width="1.8" height="1.8" fill="#8a8886" stroke="none"/></svg>
<div class="sep" style="left:511px;top:117.5px;height:17.5px;background:#dad8d6"></div>
<svg style="left:518.2px;top:120.8px" width="12" height="11.8" viewBox="0 0 12 11.8" fill="none" stroke="#a19f9d" stroke-width="0.8" ><path d="M.6 11.2H10.6V5.6Z"/><path d="M4.4 5.2Q7 5 7.2 2.2M5.6 1.2 7.4 .4 8.8 2" stroke-width=".7"/><path d="M2 4.2 4.4 5.4 3.4 3Z" fill="#a19f9d" stroke="none"/></svg>
<svg style="left:539.2px;top:120.8px" width="11.8" height="11.8" viewBox="0 0 11.8 11.8" fill="none" stroke="#a19f9d" stroke-width="0.8" ><path d="M11.2 11.2H1.2V5.6Z"/><path d="M7.4 5.2Q4.8 5 4.6 2.2M6.2 1.2 4.4 .4 3 2" stroke-width=".7"/><path d="M9.8 4.2 7.4 5.4 8.4 3Z" fill="#a19f9d" stroke="none"/></svg>
<svg style="left:560.4px;top:121.2px" width="11" height="11.2" viewBox="0 0 11 11.2" fill="none" stroke="#a19f9d" stroke-width="0.8" ><path d="M10.4 .6V5L.8 5Z"/><path d="M10.4 10.8V6.4H.8Z" fill="#c8c6c4"/></svg>
<svg style="left:581.2px;top:121px" width="10.8" height="11.4" viewBox="0 0 10.8 11.4" fill="none" stroke="#a19f9d" stroke-width="0.8" ><path d="M4.8 .8V10.8H.6Z"/><path d="M6.2 .8V10.8H10.4Z" fill="#c8c6c4"/></svg>
<div class="sep" style="left:599px;top:117.5px;height:17.5px;background:#dad8d6"></div>
<svg style="left:606.2px;top:121px" width="11.4" height="11.4" viewBox="0 0 11.4 11.4" fill="none" stroke="#a19f9d" stroke-width="0.8" ><rect x=".8" y=".8" width="9.8" height="9.8" stroke-width=".6"/><rect x="2.4" y="2.4" width="4.6" height="4.2"/><rect x="4.8" y="4.8" width="4.4" height="4.4" fill="#f3f2f1"/><rect x="0" y="0" width="1.6" height="1.6" fill="#8a8886" stroke="none"/><rect x="9.8" y="0" width="1.6" height="1.6" fill="#8a8886" stroke="none"/><rect x="0" y="9.8" width="1.6" height="1.6" fill="#8a8886" stroke="none"/><rect x="9.8" y="9.8" width="1.6" height="1.6" fill="#8a8886" stroke="none"/></svg>
<svg style="left:626.2px;top:121px" width="12" height="11.6" viewBox="0 0 12 11.6" fill="none" stroke="#a19f9d" stroke-width="0.8" ><rect x=".8" y=".8" width="6" height="5.6"/><rect x="5" y="5.2" width="6" height="5.6" fill="#f3f2f1"/><rect x="0" y="0" width="1.6" height="1.6" fill="#8a8886" stroke="none"/><rect x="6" y="0" width="1.6" height="1.6" fill="#8a8886" stroke="none"/><rect x="0" y="5.6" width="1.6" height="1.6" fill="#8a8886" stroke="none"/><rect x="4.2" y="10" width="1.6" height="1.6" fill="#8a8886" stroke="none"/><rect x="10.2" y="10" width="1.6" height="1.6" fill="#8a8886" stroke="none"/><rect x="10.2" y="4.4" width="1.6" height="1.6" fill="#8a8886" stroke="none"/></svg>
<div class="sep" style="left:645px;top:117.5px;height:17.5px;background:#dad8d6"></div>
<svg style="left:652.5px;top:121px" width="11" height="11.6" viewBox="0 0 11 11.6" fill="none" stroke="#a19f9d" stroke-width="0.8" ><path d="M3 4.2 5.8 1.4 9.2 4.8 5.8 8.2 4.4 8.2 3 6.8Z"/><path d="M4.4 2.8 3.6 1"/><path d="M9.6 5.8Q10.6 7.2 9.6 7.8Q8.6 7.2 9.6 5.8Z" stroke-width=".6"/><path d="M.2 10.6H10.8" stroke="#a6a4a2" stroke-width="2"/></svg>
<svg style="left:667.20px;top:124.70px" width="3.2" height="2" viewBox="0 0 3.2 2"><path d="M0 0H3.2L1.6 2Z" fill="#a19f9d"/></svg>
<svg style="left:677.4px;top:121px" width="10.4" height="11" viewBox="0 0 10.4 11" fill="none" stroke="#8a8886" stroke-width="0.8" ><path d="M6 2.2 8.6 4.8M6.8 3 1.6 8.2 1 10 2.8 9.4 8 4.2"/><path d="M7.2 1.6Q8.6 -.2 9.8 1Q10.8 2.2 9.2 3.6Z" fill="#a19f9d"/></svg>
<svg style="left:698px;top:121px" width="11.6" height="11.6" viewBox="0 0 11.6 11.6" fill="none" stroke="#a19f9d" stroke-width="0.8" ><rect x=".5" y="1" width="8.4" height="6.8"/><path d="M4.4 6.4 9.4 1.2 10.8 2.6 5.8 7.8 4 8.2Z" fill="#f3f2f1"/><path d="M.2 10.6H11.2" stroke="#a6a4a2" stroke-width="2"/></svg>
<svg style="left:712.60px;top:124.70px" width="3.2" height="2" viewBox="0 0 3.2 2"><path d="M0 0H3.2L1.6 2Z" fill="#a19f9d"/></svg>
<span class="t" style="left:725.6px;top:118.80px;font-size:10.6px;color:#8a8886;">A</span>
<div class="abs" style="left:724.4px;top:130.6px;width:10.6px;height:2px;background:#a6a4a2"></div>
<svg style="left:738.40px;top:124.70px" width="3.2" height="2" viewBox="0 0 3.2 2"><path d="M0 0H3.2L1.6 2Z" fill="#a19f9d"/></svg>
<div class="sep" style="left:746px;top:117.5px;height:17.5px;background:#dad8d6"></div>
<svg style="left:750.6px;top:121.4px" width="12" height="11" viewBox="0 0 12 11" fill="none" stroke="#a19f9d" stroke-width="0.8" ><rect x=".5" y=".5" width="10.6" height="9.6"/><path d="M.6 8 3.8 4.6 6.2 7M5 10 10.6 1.2" stroke-width=".7"/><path d="M6.4 9.8 10.8 5.4 11.6 6.6 8 10.2Z" fill="#f3f2f1" stroke-width=".6"/></svg>
<svg style="left:766.00px;top:124.70px" width="3.2" height="2" viewBox="0 0 3.2 2"><path d="M0 0H3.2L1.6 2Z" fill="#a19f9d"/></svg>
<svg style="left:777px;top:120.8px" width="12" height="12" viewBox="0 0 12 12" fill="none" stroke="#8a8886" stroke-width="0.8" ><path d="M2.6 0V9.4H12M0 2.6H9.4V12" stroke-width=".9"/><path d="M10.8 .8 3.6 8.4" stroke-width=".7"/></svg>
<svg style="left:794.4px;top:121.4px" width="12" height="10.6" viewBox="0 0 12 10.6" fill="none" stroke="#a19f9d" stroke-width="0.8" ><path d="M4.6 1.2H11.8M4.6 4H11.8M4.6 6.6H11.8M4.6 9.4H11.8"/><path d="M1.6 .6V9.8M.3 2 1.6.5 2.9 2M.3 8.4 1.6 9.9 2.9 8.4" stroke-width=".7"/></svg>
<svg style="left:810.20px;top:124.70px" width="3.2" height="2" viewBox="0 0 3.2 2"><path d="M0 0H3.2L1.6 2Z" fill="#a19f9d"/></svg>
<svg style="left:824.2px;top:124.4px" width="3.4" height="4.4" viewBox="0 0 3.4 4.4" fill="none" stroke="#605e5c" stroke-width="0.9" ><path d="M.2 .4H3.2" stroke="#444" stroke-width=".8"/><path d="M0 2H3.4L1.7 4.2Z" fill="#444" stroke="none"/></svg>
</div>
<!-- ===== left thumbnail pane ===== -->
<div id="left" class="abs" style="left:0;top:141px;width:131px;height:422px">
<div class="abs" style="left:130px;top:0;width:1px;height:421px;background:#d0d0d0"></div><div class="abs" style="left:130px;top:421px;width:950px;height:1px;background:#dadada"></div>
<svg style="left:10px;top:13px" width="6" height="6" viewBox="0 0 6 6"><path d="M5.4.4V5.4H.4Z" fill="#c8432a"/></svg>
<span class="t" style="left:20.5px;top:7.90px;font-size:8.5px;color:#d24726;font-weight:700;">无标题节</span>
<span class="t" style="left:9.6px;top:25.20px;font-size:10px;color:#d24726;">1</span>
<div class="abs" style="left:24px;top:26px;width:92px;height:54px;background:#ec7b57"><div class="abs" style="left:2px;top:2px;width:88px;height:50px;background:#fff;border:1px solid #3a3a3a"></div><svg style="left:2px;top:2px" width="88" height="50" viewBox="0 0 88 50" fill="none" stroke="#333" stroke-width=".8"><path d="M44.5 2.5V13.5M44.5 37V47.5M2.5 25.5H23.5M65 25.5H85.5"/><path d="M43.1 4.2 44.5 1.4 45.9 4.2ZM43.1 45.8 44.5 48.6 45.9 45.8ZM4.2 24.1 1.4 25.5 4.2 26.9ZM83.8 24.1 86.6 25.5 83.8 26.9Z" fill="#222" stroke="none"/></svg><span class="t" style="left:36.2px;top:22.3px;font-size:4.06px;color:#222;letter-spacing:0">可编辑区域</span></div>
<svg style="left:11px;top:95px" width="5" height="7" viewBox="0 0 5 7"><path d="M.5.6 4.2 3.5.5 6.4Z" fill="none" stroke="#888" stroke-width=".7"/></svg>
<span class="t" style="left:20.5px;top:92.10px;font-size:8.6px;color:#666;">无标题节 (7)</span>
</div>
<!-- ===== editing area ===== -->
<div id="edit" class="abs" style="left:131px;top:141px;width:949px;height:421px">
<svg style="left:134px;top:0" width="690" height="10" viewBox="0 0 690 10" font-family="Liberation Sans, sans-serif" font-size="8.3" fill="#555" text-anchor="middle">
<rect width="690" height="10" fill="#fff"/>
<text x="18.5" y="7.6">16</text>
<text x="38.9" y="7.6">15</text>
<text x="59.3" y="7.6">14</text>
<text x="79.7" y="7.6">13</text>
<text x="100.0" y="7.6">12</text>
<text x="120.4" y="7.6">11</text>
<text x="140.8" y="7.6">10</text>
<text x="161.2" y="7.6">9</text>
<text x="181.6" y="7.6">8</text>
<text x="201.9" y="7.6">7</text>
<text x="222.3" y="7.6">6</text>
<text x="242.7" y="7.6">5</text>
<text x="263.1" y="7.6">4</text>
<text x="283.5" y="7.6">3</text>
<text x="303.8" y="7.6">2</text>
<text x="324.2" y="7.6">1</text>
<text x="344.6" y="7.6">0</text>
<text x="365.0" y="7.6">1</text>
<text x="385.4" y="7.6">2</text>
<text x="405.7" y="7.6">3</text>
<text x="426.1" y="7.6">4</text>
<text x="446.5" y="7.6">5</text>
<text x="466.9" y="7.6">6</text>
<text x="487.3" y="7.6">7</text>
<text x="507.6" y="7.6">8</text>
<text x="528.0" y="7.6">9</text>
<text x="548.4" y="7.6">10</text>
<text x="568.8" y="7.6">11</text>
<text x="589.2" y="7.6">12</text>
<text x="609.5" y="7.6">13</text>
<text x="629.9" y="7.6">14</text>
<text x="650.3" y="7.6">15</text>
<text x="670.7" y="7.6">16</text>
<path d="M8.3 3.2V7M28.7 3.2V7M49.1 3.2V7M69.5 3.2V7M89.9 3.2V7M110.2 3.2V7M130.6 3.2V7M151.0 3.2V7M171.4 3.2V7M191.8 3.2V7M212.1 3.2V7M232.5 3.2V7M252.9 3.2V7M273.3 3.2V7M293.7 3.2V7M314.0 3.2V7M334.4 3.2V7M354.8 3.2V7M375.2 3.2V7M395.6 3.2V7M415.9 3.2V7M436.3 3.2V7M456.7 3.2V7M477.1 3.2V7M497.4 3.2V7M517.8 3.2V7M538.2 3.2V7M558.6 3.2V7M579.0 3.2V7M599.4 3.2V7M619.7 3.2V7M640.1 3.2V7M660.5 3.2V7M680.9 3.2V7" stroke="#8a8a8a" stroke-width=".8"/>
<path d="M3.2 4.6V5.6M13.4 4.6V5.6M23.6 4.6V5.6M33.8 4.6V5.6M44.0 4.6V5.6M54.2 4.6V5.6M64.4 4.6V5.6M74.6 4.6V5.6M84.8 4.6V5.6M94.9 4.6V5.6M105.1 4.6V5.6M115.3 4.6V5.6M125.5 4.6V5.6M135.7 4.6V5.6M145.9 4.6V5.6M156.1 4.6V5.6M166.3 4.6V5.6M176.5 4.6V5.6M186.7 4.6V5.6M196.8 4.6V5.6M207.0 4.6V5.6M217.2 4.6V5.6M227.4 4.6V5.6M237.6 4.6V5.6M247.8 4.6V5.6M258.0 4.6V5.6M268.2 4.6V5.6M278.4 4.6V5.6M288.6 4.6V5.6M298.7 4.6V5.6M308.9 4.6V5.6M319.1 4.6V5.6M329.3 4.6V5.6M339.5 4.6V5.6M349.7 4.6V5.6M359.9 4.6V5.6M370.1 4.6V5.6M380.3 4.6V5.6M390.5 4.6V5.6M400.6 4.6V5.6M410.8 4.6V5.6M421.0 4.6V5.6M431.2 4.6V5.6M441.4 4.6V5.6M451.6 4.6V5.6M461.8 4.6V5.6M472.0 4.6V5.6M482.2 4.6V5.6M492.4 4.6V5.6M502.5 4.6V5.6M512.7 4.6V5.6M522.9 4.6V5.6M533.1 4.6V5.6M543.3 4.6V5.6M553.5 4.6V5.6M563.7 4.6V5.6M573.9 4.6V5.6M584.1 4.6V5.6M594.3 4.6V5.6M604.4 4.6V5.6M614.6 4.6V5.6M624.8 4.6V5.6M635.0 4.6V5.6M645.2 4.6V5.6M655.4 4.6V5.6M665.6 4.6V5.6M675.8 4.6V5.6M686.0 4.6V5.6" stroke="#b0b0b0" stroke-width=".8"/>
</svg>
<svg style="left:3.5px;top:23.5px" width="9.6" height="387.8" viewBox="0 0 9.6 387.8" font-family="Liberation Sans, sans-serif" font-size="8.3" fill="#555" text-anchor="middle">
<rect width="9.6" height="387.8" fill="#fff"/>
<text transform="translate(6.9 10.1) rotate(-90)">9</text>
<text transform="translate(6.9 30.5) rotate(-90)">8</text>
<text transform="translate(6.9 50.9) rotate(-90)">7</text>
<text transform="translate(6.9 71.3) rotate(-90)">6</text>
<text transform="translate(6.9 91.7) rotate(-90)">5</text>
<text transform="translate(6.9 112.1) rotate(-90)">4</text>
<text transform="translate(6.9 132.5) rotate(-90)">3</text>
<text transform="translate(6.9 152.9) rotate(-90)">2</text>
<text transform="translate(6.9 173.3) rotate(-90)">1</text>
<text transform="translate(6.9 193.7) rotate(-90)">0</text>
<text transform="translate(6.9 214.1) rotate(-90)">1</text>
<text transform="translate(6.9 234.5) rotate(-90)">2</text>
<text transform="translate(6.9 254.9) rotate(-90)">3</text>
<text transform="translate(6.9 275.3) rotate(-90)">4</text>
<text transform="translate(6.9 295.7) rotate(-90)">5</text>
<text transform="translate(6.9 316.1) rotate(-90)">6</text>
<text transform="translate(6.9 336.5) rotate(-90)">7</text>
<text transform="translate(6.9 356.9) rotate(-90)">8</text>
<text transform="translate(6.9 377.3) rotate(-90)">9</text>
<path d="M2.3 0.3H6.3M2.3 20.7H6.3M2.3 41.1H6.3M2.3 61.5H6.3M2.3 81.9H6.3M2.3 102.3H6.3M2.3 122.7H6.3M2.3 143.1H6.3M2.3 163.5H6.3M2.3 183.9H6.3M2.3 204.3H6.3M2.3 224.7H6.3M2.3 245.1H6.3M2.3 265.5H6.3M2.3 285.9H6.3M2.3 306.3H6.3M2.3 326.7H6.3M2.3 347.1H6.3M2.3 367.5H6.3" stroke="#8a8a8a" stroke-width=".8"/>
<path d="M3.8 5.4H4.8M3.8 15.6H4.8M3.8 25.8H4.8M3.8 36.0H4.8M3.8 46.2H4.8M3.8 56.4H4.8M3.8 66.6H4.8M3.8 76.8H4.8M3.8 87.0H4.8M3.8 97.2H4.8M3.8 107.4H4.8M3.8 117.6H4.8M3.8 127.8H4.8M3.8 138.0H4.8M3.8 148.2H4.8M3.8 158.4H4.8M3.8 168.6H4.8M3.8 178.8H4.8M3.8 189.0H4.8M3.8 199.2H4.8M3.8 209.4H4.8M3.8 219.6H4.8M3.8 229.8H4.8M3.8 240.0H4.8M3.8 250.2H4.8M3.8 260.4H4.8M3.8 270.6H4.8M3.8 280.8H4.8M3.8 291.0H4.8M3.8 301.2H4.8M3.8 311.4H4.8M3.8 321.6H4.8M3.8 331.8H4.8M3.8 342.0H4.8M3.8 352.2H4.8M3.8 362.4H4.8M3.8 372.6H4.8M3.8 382.8H4.8" stroke="#b0b0b0" stroke-width=".8"/>
<path d="M0 137.9H9.6" stroke="#e07060" stroke-width=".7" stroke-dasharray="1 .8"/>
</svg>
<svg style="left:-131px;top:-141px" width="1080" height="580" viewBox="0 0 1080 580" fill="none"><rect x="264.4" y="164" width="690.3" height="388.9" fill="#fff" stroke="#000" stroke-width="2"/><path d="M609.3 168V261.2M609.3 456.1V549" stroke="#3c3c3c" stroke-width=".9"/><path d="M268 358.9H433.7M784.8 358.9H950.5" stroke="#444" stroke-width=".9"/><g fill="#111"><path d="M609.3 166.2 612.7 173.3 609.3 171.2 605.9 173.3Z"/><path d="M609.3 551 612.7 543.9 609.3 546 605.9 543.9Z"/><path d="M264.8 358.9 271.9 355.5 269.8 358.9 271.9 362.3Z"/><path d="M954 358.9 946.9 355.5 949 358.9 946.9 362.3Z"/></g></svg>
<span class="abs" style="left:398px;top:197px;width:160px;height:44px;line-height:44px;font-size:32px;color:#000;text-align:center">可编辑区域</span>
<div class="abs" style="left:938px;top:-1px;width:11px;height:385px;background:#dedede"></div>
<div class="abs" style="left:938px;top:-1px;width:11px;height:10.6px;background:#fff;border:1px solid #d4d4d4"></div>
<svg style="left:941.1px;top:2.6px" width="5" height="3" viewBox="0 0 5 3"><path d="M0 3 2.5 0 5 3Z" fill="#666"/></svg>
<div class="abs" style="left:938px;top:27px;width:11px;height:40.6px;background:#fff;border:1px solid #c2c2c2"></div>
<div class="abs" style="left:938px;top:373px;width:11px;height:10.6px;background:#fff;border:1px solid #d0d0d0"></div>
<svg style="left:941.2px;top:377px" width="5" height="3" viewBox="0 0 5 3"><path d="M0 0 2.5 3 5 0Z" fill="#666"/></svg>
<svg style="left:940.7px;top:387px" width="6" height="18" viewBox="0 0 6 18" fill="#555"><path d="M0 3 3 0 6 3Z"/><path d="M0 5.6 3 2.8 6 5.6Z"/><rect x="2.5" y="3" width="1" height="3"/><path d="M0 12.2 3 15 6 12.2Z"/><path d="M0 14.8 3 17.6 6 14.8Z"/><rect x="2.5" y="11.8" width="1" height="3"/></svg>
</div>
<!-- ===== status bar ===== -->
<div id="status" class="abs">
<span class="t" style="left:4px;top:2.20px;font-size:8.45px;color:#444;">幻灯片 第 1 张，共 8 张</span>
<svg style="left:105px;top:4.5px" width="10" height="9" viewBox="0 0 10 9" fill="none" stroke="#8a8a8a" stroke-width=".8"><path d="M.5 .8H4.2V8H.5ZM4.2 .8H8.6V3.2M4.2 8H8.6V6.2"/><path d="M6 4.6 7 5.8 9.4 3.2"/></svg>
<span class="t" style="left:124.8px;top:2.20px;font-size:8.4px;color:#444;">中文(中国)</span>
<svg style="left:812px;top:6px" width="7" height="7" viewBox="0 0 7 7" fill="none" stroke="#555" stroke-width=".8"><path d="M0 3.6H7M0 6H7M1.6 2.2 3.5.4 5.4 2.2"/></svg>
<span class="t" style="left:823px;top:2.20px;font-size:8.4px;color:#333;">备注</span>
<div class="abs" style="left:852px;top:0;width:23px;height:18px;background:#c8c6c4"></div>
<svg style="left:857.6px;top:3.6px" width="11" height="10" viewBox="0 0 11 10" fill="none" stroke="#666" stroke-width=".8"><rect x=".5" y=".5" width="10" height="9"/><rect x="3.4" y="2.6" width="5" height="3.8"/><path d="M2 .5V9.5M2 7.8H10.5"/></svg>
<svg style="left:882px;top:5px" width="9" height="9" viewBox="0 0 9 9" fill="none" stroke="#666" stroke-width=".8"><rect x=".4" y=".4" width="3" height="3"/><rect x="5.4" y=".4" width="3" height="3"/><rect x=".4" y="5.4" width="3" height="3"/><rect x="5.4" y="5.4" width="3" height="3"/></svg>
<svg style="left:905px;top:5px" width="10" height="9" viewBox="0 0 10 9" fill="none" stroke="#666" stroke-width=".8"><path d="M5 1.2V8.4M5 1.2Q2.8.2.5.8V7.6Q2.8 7 5 8.4Q7.2 7 9.5 7.6V.8Q7.2.2 5 1.2Z"/><path d="M1.8 2.6H3.6M1.8 4.2H3.6M6.4 2.6H8.2M6.4 4.2H8.2" stroke-width=".6"/></svg>
<svg style="left:929px;top:5px" width="10" height="9" viewBox="0 0 10 9" fill="none" stroke="#666" stroke-width=".8"><path d="M0 .6H10M1 .6V5H9V.6M5 5V8M3 8.4H7"/></svg>
<div class="abs" style="left:949.5px;top:8px;width:5px;height:1.3px;background:#555"></div>
<div class="abs" style="left:957px;top:9px;width:70px;height:1px;background:#b8b8b8"></div>
<div class="abs" style="left:991.5px;top:6.5px;width:1px;height:5px;background:#c4c4c4"></div>
<div class="abs" style="left:982px;top:4px;width:3px;height:9px;background:#666"></div>
<div class="abs" style="left:1029.5px;top:8px;width:5.4px;height:1.3px;background:#555"></div>
<div class="abs" style="left:1031.5px;top:5.9px;width:1.3px;height:5.4px;background:#555"></div>
<span class="t" style="left:1041.8px;top:2.20px;font-size:8.7px;color:#444;">77%</span>
<svg style="left:1068.6px;top:4.2px" width="9" height="9" viewBox="0 0 9 9" fill="none" stroke="#777" stroke-width=".8"><rect x=".4" y=".4" width="8.2" height="8.2"/><path d="M4.5 .4V3M4.5 8.6V6M.4 4.5H3M8.6 4.5H6"/></svg>
</div>
</body>
</html>
